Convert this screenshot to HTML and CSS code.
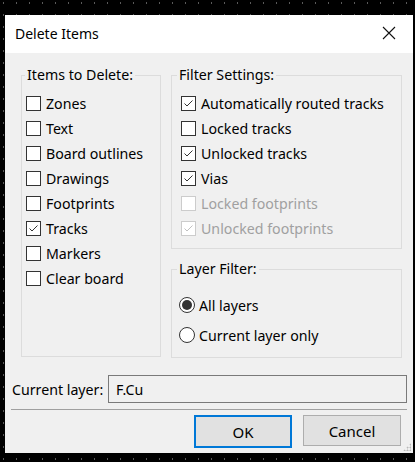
FILE: index.html
```html
<!DOCTYPE html>
<html>
<head>
<meta charset="utf-8">
<link rel="stylesheet" href="styles.css">
</head>
<body>
<div class="window">
  <div class="titlebar">
    <span class="title">Delete Items</span>
    <svg class="close" width="14" height="14" viewBox="0 0 14 14"><path d="M1 1L13 13M13 1L1 13" stroke="#111" stroke-width="1.1" fill="none"/></svg>
  </div>
  <div class="content">
    <div class="columns">
      <fieldset class="group left">
        <legend>Items to Delete:</legend>
        <div class="row"><span class="box"></span>Zones</div>
        <div class="row"><span class="box"></span>Text</div>
        <div class="row"><span class="box"></span>Board outlines</div>
        <div class="row"><span class="box"></span>Drawings</div>
        <div class="row"><span class="box"></span>Footprints</div>
        <div class="row"><span class="box"><svg viewBox="0 0 13 13"><path d="M2.5 6.5L5 9L10.5 3.5" /></svg></span>Tracks</div>
        <div class="row"><span class="box"></span>Markers</div>
        <div class="row"><span class="box"></span>Clear board</div>
      </fieldset>
      <div class="rightcol">
        <fieldset class="group filter">
          <legend>Filter Settings:</legend>
          <div class="row"><span class="box"><svg viewBox="0 0 13 13"><path d="M2.5 6.5L5 9L10.5 3.5" /></svg></span>Automatically routed tracks</div>
          <div class="row"><span class="box"></span>Locked tracks</div>
          <div class="row"><span class="box"><svg viewBox="0 0 13 13"><path d="M2.5 6.5L5 9L10.5 3.5" /></svg></span>Unlocked tracks</div>
          <div class="row"><span class="box"><svg viewBox="0 0 13 13"><path d="M2.5 6.5L5 9L10.5 3.5" /></svg></span>Vias</div>
          <div class="row disabled"><span class="box"></span>Locked footprints</div>
          <div class="row disabled"><span class="box"><svg viewBox="0 0 13 13"><path d="M2.5 6.5L5 9L10.5 3.5" /></svg></span>Unlocked footprints</div>
        </fieldset>
        <fieldset class="group layer">
          <legend>Layer Filter:</legend>
          <div class="row radio-row"><span class="radio on"></span>All layers</div>
          <div class="row radio-row"><span class="radio"></span>Current layer only</div>
        </fieldset>
      </div>
    </div>
    <div class="current">
      <span class="clabel">Current layer:</span>
      <div class="input">F.Cu</div>
    </div>
    <div class="sep"></div>
    <div class="buttons">
      <button class="btn ok">OK</button>
      <button class="btn">Cancel</button>
    </div>
    <div class="grip"></div>
  </div>
</div>
</body>
</html>
```
FILE: styles.css
```css
html, body {
  margin: 0;
  padding: 0;
}
body {
  width: 415px;
  height: 462px;
  background-color: #000;
  background-image: radial-gradient(circle, #5a5a5a 0.7px, transparent 1px);
  background-size: 13px 12px;
  background-position: -3px -3px;
  font-family: "Noto Sans", "Open Sans", sans-serif;
  font-size: 14.2px;
  color: #000;
  padding-top: 15px;
  padding-left: 5px;
  box-sizing: border-box;
  overflow: hidden;
}
.window {
  width: 408px;
  height: 438px;
  display: flex;
  flex-direction: column;
}
.titlebar {
  height: 38px;
  background: #fff;
  display: flex;
  align-items: center;
  justify-content: space-between;
  padding: 0 17px 2px 10px;
  box-sizing: border-box;
  font-size: 14px;
}
.close {
  display: block;
}
.content {
  flex: 1;
  background: #f0f0f0;
  position: relative;
  padding: 13px 6px 0 6px;
  display: flex;
  flex-direction: column;
}
.columns {
  display: flex;
  gap: 10px;
  padding-left: 10px;
  padding-right: 5px;
}
.group {
  margin: 0;
  border: 1px solid #dcdcdc;
  padding: 7px 0 0 4px;
  min-width: 0;
}
.group legend {
  padding: 0 2px;
  line-height: 18px;
  height: 18px;
}
.left {
  width: 140px;
  height: 291px;
  box-sizing: border-box;
  padding-left: 4px;
}
.left legend {
  margin-left: -1px;
}
.rightcol {
  width: 231px;
  display: flex;
  flex-direction: column;
  gap: 11px;
}
.filter {
  height: 183px;
  box-sizing: border-box;
  padding-left: 9px;
}
.filter legend {
  margin-left: -4px;
}
.layer {
  height: 98px;
  box-sizing: border-box;
  padding-left: 7px;
  padding-top: 12px;
}
.layer legend {
  margin-left: -2px;
}
.row {
  height: 25px;
  display: flex;
  align-items: center;
  white-space: nowrap;
}
.box {
  width: 13px;
  height: 13px;
  border: 1px solid #333;
  background: #fff;
  margin-right: 5px;
  flex: none;
  display: flex;
}
.box svg {
  width: 13px;
  height: 13px;
  fill: none;
  stroke: #333;
  stroke-width: 1;
}
.disabled {
  color: #a0a0a0;
}
.disabled .box {
  border-color: #cccccc;
}
.disabled .box svg {
  stroke: #c0c0c0;
}
.radio-row {
  height: 30px;
}
.radio {
  width: 14px;
  height: 14px;
  border: 1px solid #333;
  border-radius: 50%;
  background: #fff;
  margin-right: 4px;
  flex: none;
  display: flex;
  align-items: center;
  justify-content: center;
}
.radio.on::after {
  content: "";
  width: 10px;
  height: 10px;
  border-radius: 50%;
  background: #333;
}
.current {
  display: flex;
  align-items: center;
  margin-top: 17px;
  height: 28px;
}
.clabel {
  margin-left: 1px;
  width: 96px;
}
.input {
  flex: 1;
  height: 28px;
  box-sizing: border-box;
  border: 1px solid #7a7a7a;
  background: #f0f0f0;
  padding-left: 7px;
  display: flex;
  align-items: center;
}
.sep {
  height: 1px;
  background: #a0a0a0;
  margin-top: 6px;
}
.buttons {
  display: flex;
  justify-content: flex-end;
  gap: 11px;
  margin-top: 5px;
  padding-right: 6px;
}
.btn {
  width: 98px;
  height: 31px;
  box-sizing: border-box;
  background: #e1e1e1;
  border: 1px solid #adadad;
  font-family: inherit;
  font-size: 15px;
  color: #000;
  padding: 0;
}
.btn.ok {
  border: 2px solid #0078d7;
  height: 33px;
}
.grip {
  position: absolute;
  right: 2px;
  bottom: 2px;
  width: 8px;
  height: 8px;
  background-image: radial-gradient(circle, #b8b8b8 0.9px, transparent 1.1px);
  background-size: 3px 3px;
  clip-path: polygon(100% 0, 100% 100%, 0 100%);
}
```
